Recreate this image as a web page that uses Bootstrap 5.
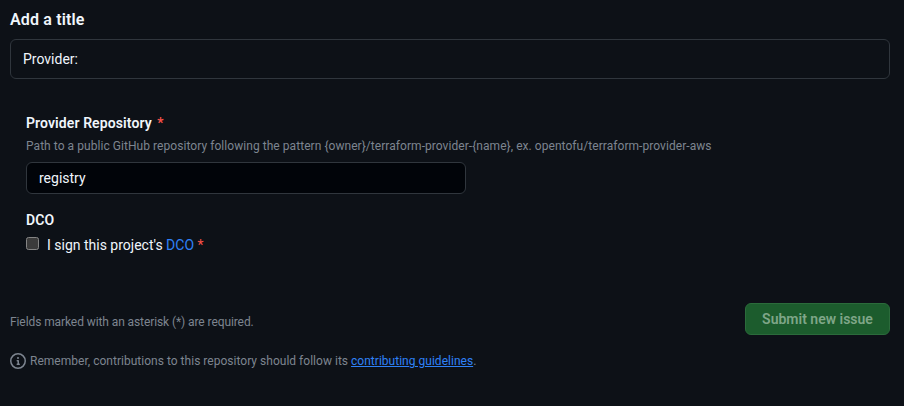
<!doctype html>
<html lang="en"><head><meta charset="utf-8"><title>New issue</title>
<link href="https://cdn.jsdelivr.net/npm/bootstrap@5.3.0/dist/css/bootstrap.min.css" rel="stylesheet">
<style>
html,body{height:100%}
body{background:#0d1117;color:#e6edf3;font-family:Roboto,"Noto Sans",sans-serif;font-size:14px;overflow:hidden}
.page-wrap{padding:10px 14px 0 10px}
.title-label{font-size:16px;font-weight:600;line-height:20px;margin:0 0 9px;color:#f0f6fc;letter-spacing:.15px}
.title-input{height:40px;background:#0d1117;border:1px solid #30363d;border-radius:6px;color:#f0f6fc;font-size:14px;padding:0 12px}
.form-area{padding:34px 16px 0}
.field-label{font-size:14px;font-weight:600;line-height:20px;color:#f0f6fc;margin:0;letter-spacing:.1px}
.req{color:#f85149;margin-left:2px}
.hint{font-size:12px;line-height:18px;color:#7d8590;margin:4px 0 7px;letter-spacing:.055px}
.repo-input{width:440px;height:32px;background:#010409;border:1px solid #30363d;border-radius:6px;color:#f0f6fc;font-size:14px;padding:0 12px}
.repo-input:focus,.title-input:focus{background:#010409;color:#f0f6fc;border-color:#30363d;box-shadow:none}
.dco-block{margin-top:16px}
.check-row{margin-top:5px;line-height:20px;font-size:14px;color:#f0f6fc}
.check-row .req{margin-left:0}
.check-box{width:13px;height:13px;margin:0 0 3px;background:#3b3b3b;border:1px solid #858585;border-radius:2.5px;appearance:none;flex:none}
.check-row a,.guide a{color:#2f81f7}
.check-row a{text-decoration:none}
.foot-row{margin-top:48px}
.note{font-size:12px;line-height:18px;color:#7d8590}
.foot-note{margin-top:6px;letter-spacing:-.09px}
.submit-btn:disabled{width:145px;height:32px;padding:0;font-size:14px;font-weight:600;background:#1c5c2d;border:1px solid #2b6b3b;border-radius:6px;color:#7fa688;opacity:1}
.guide{margin-top:17px;letter-spacing:.02px}
</style></head>
<body>
<main class="page-wrap">
<h1 class="title-label">Add a title</h1>
<input class="form-control title-input" value="Provider:" aria-label="Add a title">
<form class="form-area">
<label class="field-label d-block">Provider Repository <span class="req">*</span></label>
<p class="hint">Path to a public GitHub repository following the pattern {owner}/terraform-provider-{name}, ex. opentofu/terraform-provider-aws</p>
<input class="form-control repo-input" value="registry" aria-label="Provider Repository">
<div class="dco-block">
<div class="field-label">DCO</div>
<div class="check-row d-flex align-items-center gap-2"><input type="checkbox" class="check-box" aria-label="Sign"><span>I sign this project's <a href="#">DCO</a> <span class="req">*</span></span></div>
</div>
</form>
<div class="foot-row d-flex justify-content-between align-items-center">
<span class="note foot-note">Fields marked with an asterisk (*) are required.</span>
<button class="btn submit-btn" disabled>Submit new issue</button>
</div>
<div class="guide note d-flex align-items-center gap-1">
<svg width="16" height="16" viewBox="0 0 16 16" fill="#7d8590" aria-hidden="true"><path d="M0 8a8 8 0 1 1 16 0A8 8 0 0 1 0 8Zm8-6.5a6.5 6.5 0 1 0 0 13 6.5 6.5 0 0 0 0-13ZM6.5 7.75A.75.75 0 0 1 7.25 7h1a.75.75 0 0 1 .75.75v2.75h.25a.75.75 0 0 1 0 1.5h-2a.75.75 0 0 1 0-1.5h.25v-2h-.25a.75.75 0 0 1-.75-.75ZM8 6a1 1 0 1 1 0-2 1 1 0 0 1 0 2Z"/></svg>
<span>Remember, contributions to this repository should follow its <a href="#">contributing guidelines</a>.</span>
</div>
</main>
<script src="https://cdn.jsdelivr.net/npm/bootstrap@5.3.0/dist/js/bootstrap.bundle.min.js"></script>
</body></html>
